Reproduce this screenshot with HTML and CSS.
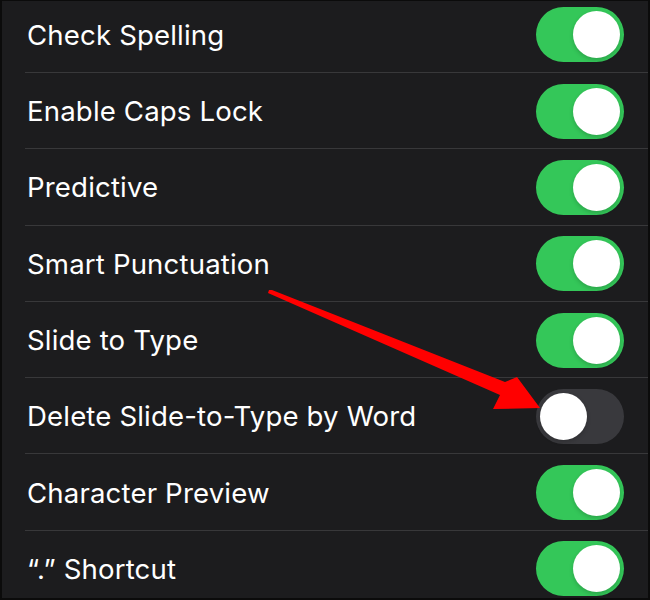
FILE: index.html
```html
<!DOCTYPE html>
<html>
<head>
<meta charset="utf-8">
<link rel="stylesheet" href="styles.css">
</head>
<body>
<div class="screen">
  <div class="list">
    <div class="row"><span class="label">Check Spelling</span><span class="toggle on"><span class="knob"></span></span></div>
    <div class="row"><span class="label">Enable Caps Lock</span><span class="toggle on"><span class="knob"></span></span></div>
    <div class="row"><span class="label">Predictive</span><span class="toggle on"><span class="knob"></span></span></div>
    <div class="row"><span class="label">Smart Punctuation</span><span class="toggle on"><span class="knob"></span></span></div>
    <div class="row"><span class="label">Slide to Type</span><span class="toggle on"><span class="knob"></span></span></div>
    <div class="row"><span class="label">Delete Slide-to-Type by Word</span><span class="toggle off"><span class="knob"></span></span></div>
    <div class="row"><span class="label">Character Preview</span><span class="toggle on"><span class="knob"></span></span></div>
    <div class="row"><span class="label">“.” Shortcut</span><span class="toggle on"><span class="knob"></span></span></div>
  </div>
  <svg class="arrow" width="650" height="600" viewBox="0 0 650 600">
    <polygon points="269,290 272,290 505,382 517,377 540,408 493,409 500,395 268,293" fill="#ff0000"/>
  </svg>
</div>
</body>
</html>
```

FILE: styles.css
```css
html, body {
  margin: 0;
  padding: 0;
  background: #0b0b0b;
}
.screen {
  position: relative;
  width: 650px;
  height: 600px;
  box-sizing: border-box;
  border: 2px solid #0b0b0b;
  border-top-width: 1px;
  background: #1c1c1e;
  overflow: hidden;
  font-family: "Inter", "Roboto", sans-serif;
}
.list {
  margin-top: -4.3px;
  padding-left: 23px;
}
.row {
  height: 76.3px;
  box-sizing: border-box;
  border-bottom: 1px solid #38383a;
  display: flex;
  align-items: center;
  justify-content: space-between;
  padding-right: 24px;
  padding-top: 1px;
}
.label {
  color: #ffffff;
  font-size: 27.6px;
  letter-spacing: 0.15px;
  padding-left: 2px;
}
.toggle {
  width: 88px;
  height: 55px;
  border-radius: 28px;
  box-sizing: border-box;
  padding: 4px;
  display: flex;
}
.toggle.on {
  background: #34c759;
  justify-content: flex-end;
}
.toggle.off {
  background: #39393d;
  justify-content: flex-start;
}
.knob {
  width: 47px;
  height: 47px;
  border-radius: 50%;
  background: #ffffff;
  box-shadow: 0 2px 4px rgba(0,0,0,0.18);
}
.arrow {
  position: absolute;
  left: -2px;
  top: -1px;
}
```
